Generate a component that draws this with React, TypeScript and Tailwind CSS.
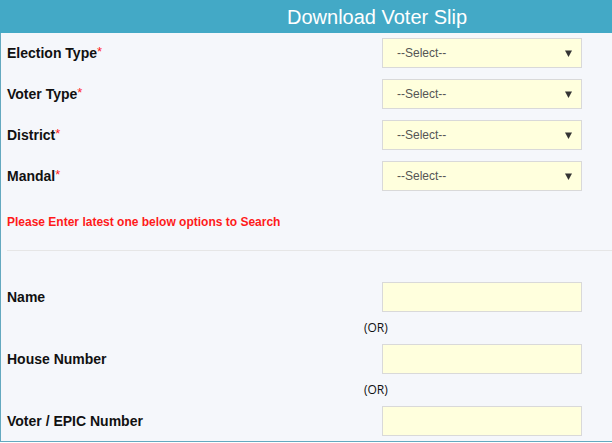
import React from "react";

function Sel() {
  return (
    <div className="flex h-[30px] w-[200px] items-center justify-between border border-[#d9d9d9] bg-[#ffffdd] pl-[14px] pr-[9px] text-[12px] text-[#555]">
      <span>--Select--</span>
      <svg width="7" height="7" viewBox="0 0 7 7"><path d="M0 0.5h7L3.5 7z" fill="#333" /></svg>
    </div>
  );
}

function Inp() {
  return <div className="h-[30px] w-[200px] border border-[#d9d9d9] bg-[#ffffdd]" />;
}

function Req({ label }: { label: string }) {
  return (
    <div className="flex h-[30px] items-center">
      <div className="w-[381px] pl-[6px] text-[14px] font-bold text-[#111]">
        {label}
        <span className="relative top-[-2px] text-[13px] font-normal text-[#ff2222]">*</span>
      </div>
      <Sel />
    </div>
  );
}

function Opt({ label }: { label: string }) {
  return (
    <div className="flex h-[30px] items-center">
      <div className="w-[381px] pl-[6px] text-[14px] font-bold text-[#111]">{label}</div>
      <Inp />
    </div>
  );
}

function Or() {
  return (
    <div className="flex h-[32px] items-center pl-[363px] text-[12px] text-[#111]" style={{ fontFamily: '"Open Sans", sans-serif' }}>
      (OR)
    </div>
  );
}

export default function App() {
  return (
    <div className="h-[443px] w-[612px] overflow-hidden bg-white" style={{ fontFamily: '"Liberation Sans", Arial, sans-serif' }}>
      <div className="flex h-[33px] items-center bg-[#43a9c6] pl-[287px] text-[20px] text-white">Download Voter Slip</div>
      <div className="flex h-[409px] flex-col border-b border-l border-[#64a9c0] bg-[#f5f7fb] pt-[5px]">
        <div className="flex flex-col gap-[11px]">
          <Req label="Election Type" />
          <Req label="Voter Type" />
          <Req label="District" />
          <Req label="Mandal" />
        </div>
        <div className="mt-[24px] pl-[6px] text-[12px] font-bold leading-[14px] text-[#ff1a1a]">Please Enter latest one below options to Search</div>
        <div className="ml-[6px] mt-[21px] h-px bg-[#e6e6e6]" />
        <div className="mt-[31px] flex flex-col">
          <Opt label="Name" />
          <Or />
          <Opt label="House Number" />
          <Or />
          <Opt label="Voter / EPIC Number" />
        </div>
      </div>
    </div>
  );
}
